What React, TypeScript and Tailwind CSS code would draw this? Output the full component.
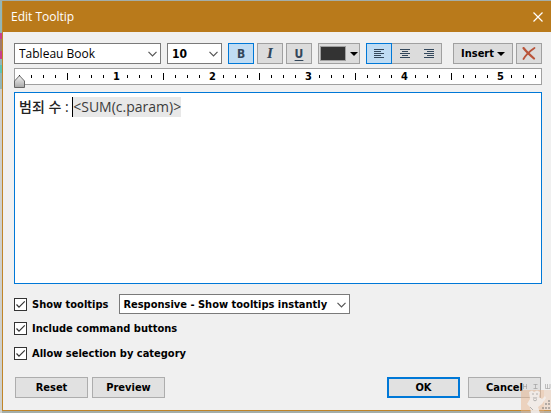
import type { ReactNode } from "react";

const ui = "font-['DejaVu_Sans_Condensed','DejaVu_Sans',sans-serif]";

function Chevron({ className }: { className: string }) {
  return (
    <svg className={`pointer-events-none absolute ${className}`} width="9" height="6" viewBox="0 0 9 6" fill="none" stroke="#555" strokeWidth="1.2" aria-hidden="true">
      <path d="M.5 .8 4.5 4.8 8.5 .8" />
    </svg>
  );
}

function Caret() {
  return (
    <svg width="8" height="4" viewBox="0 0 8 4" aria-hidden="true">
      <path d="M0 0H8L4 4Z" fill="#000" />
    </svg>
  );
}

function ToolButton({ label, active = false, className = "", children }: { label: string; active?: boolean; className?: string; children: ReactNode }) {
  return (
    <button
      type="button"
      aria-label={label}
      aria-pressed={active}
      className={`flex h-[21px] shrink-0 items-center justify-center border ${active ? "border-[#0078d7] bg-[#c0dcf3]" : "border-[#a0a0a0] bg-[#dcdcdc]"} ${className}`}
    >
      {children}
    </button>
  );
}

function AlignIcon({ d }: { d: string }) {
  return (
    <svg width="10" height="9" viewBox="0 0 10 9" stroke="#33475b" shapeRendering="crispEdges" aria-hidden="true">
      <path d={d} />
    </svg>
  );
}

function Ruler() {
  return (
    <div className="relative h-[17px] border border-[#a0a0a0] bg-white">
      <div className="flex h-full overflow-hidden pl-1 text-[11px] font-bold text-black">
        {Array.from({ length: 44 }, (_, i) => (
          <div key={i} className="flex h-[15px] w-3 shrink-0 items-center">
            {i > 0 && i % 8 === 0 ? (
              <span className="flex w-[3px] justify-center">{i / 8}</span>
            ) : (
              <span className={i % 8 === 4 ? "h-[7px] w-px bg-black" : "h-[3px] w-px bg-black"} />
            )}
          </div>
        ))}
      </div>
      <svg className="absolute top-1.5 -left-px" width="11" height="13" viewBox="0 0 11 13" aria-hidden="true">
        <defs>
          <linearGradient id="marker" x1="0" y1="0" x2="0" y2="1">
            <stop offset="0" stopColor="#f4f4f4" />
            <stop offset="1" stopColor="#a8a8a8" />
          </linearGradient>
        </defs>
        <path d="M.5 12.5V6L5.5 .7 10.5 6V12.5Z" fill="url(#marker)" stroke="#666" />
      </svg>
    </div>
  );
}

function Check({ label }: { label: string }) {
  return (
    <label className="flex h-[13px] items-center gap-[5px]">
      <span className="relative size-[13px]">
        <input type="checkbox" defaultChecked className="block size-[13px] appearance-none border border-[#333] bg-white" />
        <svg className="pointer-events-none absolute inset-0" width="13" height="13" viewBox="0 0 13 13" fill="none" stroke="#333" strokeWidth="1.2" aria-hidden="true">
          <path d="M2.5 6.5 5 9.2 10.8 3.4" />
        </svg>
      </span>
      {label}
    </label>
  );
}

function PushButton({ primary = false, children }: { primary?: boolean; children: ReactNode }) {
  return (
    <button type="button" className={`flex h-[21px] w-[73px] items-center justify-center bg-[#e1e1e1] ${primary ? "border-2 border-[#0078d7]" : "border border-[#adadad]"}`}>
      {children}
    </button>
  );
}

function Backdrop() {
  return (
    <div className="flex w-0.5 shrink-0 flex-col bg-[#cfd0cc]" aria-hidden="true">
      <div className="h-8 bg-[#93b6b8]" />
      <div className="h-1.5 bg-[#c8408c]" />
      <div className="h-3 bg-[#a07a6c]" />
      <div className="h-2 bg-[#c8408c]" />
      <div className="h-1.5 bg-[#93b6b8]" />
      <div className="h-2 bg-[#5cc4b4]" />
      <div className="h-4 bg-[#93b6b8]" />
    </div>
  );
}

function Watermark() {
  return (
    <svg className="pointer-events-none absolute right-0 bottom-0" width="30" height="30" viewBox="0 0 30 30" aria-hidden="true">
      <rect x="0" y="7" width="23" height="23" fill="#e8b48c" opacity=".5" />
      <rect x="23" y="7" width="7" height="23" fill="#e8b48c" opacity=".3" />
      <g fill="none" stroke="#8a8a8a" opacity=".5">
        <path d="M2.5 1V6M5.5 1V6M2.5 3.5H5.5M12.5 1.5H16.5M14.5 1.5V5.5M12.5 5.5H16.5M24.5 1V5.5H29V1M26.5 1V5.5" />
      </g>
      <path d="M8 9 11 7.500 13 9 16 7.500 19 9 18 14 21 16 24 13 25 15 21 21 17 24 19 30H10L9 24 6 21 9 16Z" fill="#f2f0ee" opacity=".85" />
      <path d="M11 11H13M15 11H17M12 15H16M12 16.500 14 18 16 16.500M9 24 12 27" fill="none" stroke="#888" opacity=".6" />
      <path d="M27 17h2v2h-2zM24 20h2v2h-2zM27 20h2v2h-2zM21 24h2v2h-2zM24 24h2v2h-2zM27 24h2v2h-2z" fill="#777" opacity=".5" />
    </svg>
  );
}

export default function App() {
  return (
    <div className={`relative flex min-h-screen bg-[#a3aeaa] pt-px text-[11px] leading-[15px] text-black ${ui}`}>
      <Backdrop />
      <main className="mb-0.5 flex min-w-0 grow flex-col border-b border-l border-[#c08528] bg-[#f0f0f0]">
        <header className="flex h-[31px] items-center justify-between bg-[#b97a1b] pr-2 pl-2 text-white">
          <h1 className="font-['Open_Sans',sans-serif] text-xs">Edit Tooltip</h1>
          <button type="button" aria-label="Close">
            <svg width="10" height="10" viewBox="0 0 10 10" stroke="#fff" strokeWidth="1.2" aria-hidden="true">
              <path d="M.5 .5 9.5 9.5M9.5 .5 .5 9.5" />
            </svg>
          </button>
        </header>

        <div className="flex grow flex-col pt-[11px] pr-[9px] pb-3 pl-[11px]">
          <div className="flex">
            <div className="relative mr-1.5 w-[147px]">
              <select aria-label="Font" className="block h-[21px] w-full appearance-none border border-[#7a7a7a] bg-white pl-1 font-['Open_Sans',sans-serif] text-xs">
                <option>Tableau Book</option>
              </select>
              <Chevron className="top-2 right-1" />
            </div>
            <div className="relative mr-1.5 w-[55px]">
              <select aria-label="Font size" className="block h-[21px] w-full appearance-none border border-[#7a7a7a] bg-white pl-1 text-xs font-bold">
                <option>10</option>
              </select>
              <Chevron className="top-2 right-1" />
            </div>
            <div className="mr-1.5 flex gap-[3px] text-xs text-[#33475b]">
              <ToolButton label="Bold" active className="w-[26px] font-bold">B</ToolButton>
              <ToolButton label="Italic" className="w-[26px] font-['DejaVu_Serif',serif] font-bold italic">I</ToolButton>
              <ToolButton label="Underline" className="w-[26px] font-bold underline underline-offset-2">U</ToolButton>
            </div>
            <ToolButton label="Text color" className="mr-1.5 w-[42px] gap-1">
              <span className="h-[15px] w-[26px] border border-[#a0a0a0] bg-[#333]" />
              <Caret />
            </ToolButton>
            <div className="flex">
              <ToolButton label="Align left" active className="w-[26px]">
                <AlignIcon d="M0 .5H10M0 2.5H7M0 4.5H10M0 6.5H7M0 8.5H10" />
              </ToolButton>
              <ToolButton label="Align center" className="w-[25px] border-x-0">
                <AlignIcon d="M0 .5H10M2 2.5H8M0 4.5H10M2 6.5H8M0 8.5H10" />
              </ToolButton>
              <ToolButton label="Align right" className="w-[25px] border-l-0">
                <AlignIcon d="M0 .5H10M3 2.5H10M0 4.5H10M3 6.5H10M0 8.5H10" />
              </ToolButton>
            </div>
            <div className="ml-auto flex gap-[3px]">
              <ToolButton label="Insert" className="w-[60px] gap-[3px] font-bold">
                Insert
                <Caret />
              </ToolButton>
              <ToolButton label="Clear" className="w-[26px]">
                <svg width="14" height="13" viewBox="0 0 14 13" fill="none" stroke="#b9543a" strokeLinecap="round" aria-hidden="true">
                  <path d="M1.5 1Q5 5.500 12 11.500" strokeWidth="2.200" />
                  <path d="M12.500 1Q5 6 1.500 12" strokeWidth="1.800" />
                </svg>
              </ToolButton>
            </div>
          </div>

          <div className="mt-1">
            <Ruler />
          </div>

          <div
            contentEditable
            suppressContentEditableWarning
            role="textbox"
            aria-label="Tooltip text"
            className="mt-[7px] min-h-[192px] grow border border-[#0078d7] bg-white px-1 pt-1 font-['Open_Sans','Noto_Sans_CJK_KR',sans-serif] text-sm leading-5 text-[#222] outline-none"
          >
            <span className="font-medium">범죄 수 : </span>
            <span className="inline-block border-l border-black bg-[#e8e8e8] font-medium text-[#3c3c3c]">&lt;SUM(c.param)&gt;</span>
          </div>

          <div className="mt-2.5 flex h-5 items-center gap-[11px] font-bold">
            <Check label="Show tooltips" />
            <div className="relative w-[231px]">
              <select aria-label="Tooltip mode" className="block h-5 w-full appearance-none border border-[#7a7a7a] bg-white pl-[3px] font-bold">
                <option>Responsive - Show tooltips instantly</option>
              </select>
              <Chevron className="top-2 right-1" />
            </div>
          </div>
          <div className="mt-2 flex flex-col gap-3 font-bold">
            <Check label="Include command buttons" />
            <Check label="Allow selection by category" />
          </div>

          <div className="mt-[17px] flex justify-between pl-px font-bold">
            <div className="flex gap-1">
              <PushButton>Reset</PushButton>
              <PushButton>Preview</PushButton>
            </div>
            <div className="flex gap-2 pr-px">
              <PushButton primary>OK</PushButton>
              <PushButton>Cancel</PushButton>
            </div>
          </div>
        </div>
      </main>
      <Watermark />
    </div>
  );
}
